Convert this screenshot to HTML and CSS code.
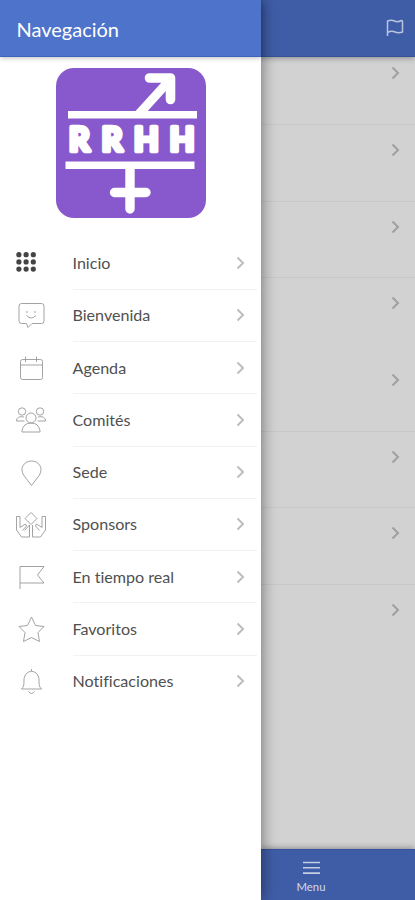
FILE: index.html
```html
<!DOCTYPE html>
<html lang="es">
<head>
  <meta charset="UTF-8" />
  <meta name="viewport" content="width=device-width, initial-scale=1.0"/>
  <title>Navegación</title>
  <link rel="stylesheet" href="styles.css">
</head>
<body>

  <div class="app">
    <!-- Side menu -->
    <aside class="drawer">
      <header class="drawer-header">
        <h1>Navegación</h1>
      </header>

      <div class="logo">
        <svg width="150" height="150" viewBox="0 0 150 150">
          <rect width="150" height="150" rx="18" fill="#8859cc"/>
          <g fill="none" stroke="#fff">
            <path d="M12 46.800H141M9.500 97.300H138.500" stroke-width="7.600"/>
            <path d="M82 47L112 14" stroke-width="9"/>
            <path d="M93.500 10H114.500V31.500" stroke-width="9.600" stroke-linecap="round" stroke-linejoin="round"/>
            <path d="M104 12H113V22Z" fill="#fff" stroke-width="2"/>
            <path d="M74 99V141M58.500 124.500H90" stroke-width="9.400" stroke-linecap="round"/>
          </g>
          <text class="logo-text" x="13 45.700 78 113.800" y="83.300">RRHH</text>
        </svg>
      </div>

      <nav class="menu">
        <a class="menu-item" href="#">
          <svg class="icon grid-icon" viewBox="0 0 32 32">
            <circle cx="3.900" cy="6.700" r="2.600"/><circle cx="11.100" cy="6.700" r="2.600"/><circle cx="18.300" cy="6.700" r="2.600"/>
            <circle cx="3.900" cy="13.900" r="2.600"/><circle cx="11.100" cy="13.900" r="2.600"/><circle cx="18.300" cy="13.900" r="2.600"/>
            <circle cx="3.900" cy="21.100" r="2.600"/><circle cx="11.100" cy="21.100" r="2.600"/><circle cx="18.300" cy="21.100" r="2.600"/>
          </svg>
          <span class="label">Inicio<svg class="chevron" viewBox="0 0 9 14"><path d="M1.500 1.500L7 7l-5.500 5.500"/></svg></span>
        </a>
        <a class="menu-item" href="#">
          <svg class="icon" viewBox="0 0 32 32"><path d="M6.500 3.500h20q2.500 0 2.500 2.500v15q0 2.500-2.500 2.500H17l-4 4-1.500-4h-5q-2.500 0-2.500-2.500V6q0-2.500 2.500-2.500z"/><path d="M12 11v2M20 11v2M11.500 15.500q4.500 5 9.500 0"/></svg>
          <span class="label">Bienvenida<svg class="chevron" viewBox="0 0 9 14"><path d="M1.500 1.500L7 7l-5.500 5.500"/></svg></span>
        </a>
        <a class="menu-item" href="#">
          <svg class="icon" viewBox="0 0 32 32"><rect x="5.500" y="7.500" width="22" height="20" rx="2"/><path d="M5.500 13h22M10.500 4.500v5.500M21.500 4.500v5.500"/></svg>
          <span class="label">Agenda<svg class="chevron" viewBox="0 0 9 14"><path d="M1.500 1.500L7 7l-5.500 5.500"/></svg></span>
        </a>
        <a class="menu-item" href="#">
          <svg class="icon" viewBox="0 0 32 32"><circle cx="7" cy="7.500" r="3.700"/><circle cx="25" cy="7.500" r="3.700"/><circle cx="16" cy="14" r="5"/><path d="M7 28v-1.500q1.500-7.500 9-7.500t9 7.500V28zM9.500 17H1.500c0-3.500 3-5 7.500-4M22.500 17h8c0-3.500-3-5-7.500-4"/></svg>
          <span class="label">Comités<svg class="chevron" viewBox="0 0 9 14"><path d="M1.500 1.500L7 7l-5.500 5.500"/></svg></span>
        </a>
        <a class="menu-item" href="#">
          <svg class="icon" viewBox="0 0 32 32"><path d="M16.500 28.500L8.500 18C4.500 11 9 4 16.500 4s12 7 8 14z"/></svg>
          <span class="label">Sede<svg class="chevron" viewBox="0 0 9 14"><path d="M1.500 1.500L7 7l-5.500 5.500"/></svg></span>
        </a>
        <a class="menu-item" href="#">
          <svg class="icon" viewBox="0 0 32 32"><path d="M16 3.500l6 6-6 6-6-6zM6.500 28l-5-7V7.500H5v11l5.500-3.500 1 2-4 4.500M6.500 28h8V16l-5 5.500M25.500 28l5-7V7.500H27v11L21.500 15l-1 2 4 4.500M25.500 28h-8V16"/></svg>
          <span class="label">Sponsors<svg class="chevron" viewBox="0 0 9 14"><path d="M1.500 1.500L7 7l-5.500 5.500"/></svg></span>
        </a>
        <a class="menu-item" href="#">
          <svg class="icon" viewBox="0 0 32 32"><path d="M5 28V5.500H29l-6.500 8.500 6.500 8H5"/></svg>
          <span class="label">En tiempo real<svg class="chevron" viewBox="0 0 9 14"><path d="M1.500 1.500L7 7l-5.500 5.500"/></svg></span>
        </a>
        <a class="menu-item" href="#">
          <svg class="icon" viewBox="0 0 32 32"><path d="M16.500 4l4 8.500 8.500 1-6 6 1.500 9-8-4-8 4 1.500-9-6-6 8.500-1z"/></svg>
          <span class="label">Favoritos<svg class="chevron" viewBox="0 0 9 14"><path d="M1.500 1.500L7 7l-5.500 5.500"/></svg></span>
        </a>
        <a class="menu-item" href="#">
          <svg class="icon" viewBox="0 0 32 32"><path d="M16.500 3v2M6.500 23c4-4 1.500-8 3-12 2-7.500 12-7.500 14 0 1.500 4-1 8 3 12zM13.500 25.500q3 4 6 0"/></svg>
          <span class="label">Notificaciones<svg class="chevron" viewBox="0 0 9 14"><path d="M1.500 1.500L7 7l-5.500 5.500"/></svg></span>
        </a>
      </nav>
    </aside>

    <!-- Dimmed page behind the menu -->
    <main class="page">
      <header class="page-header">
        <svg class="flag" viewBox="0 0 18 18"><path d="M1.500 17V2q4-1.500 7 0t7-.5q1 0 1 1V13q-4 1.500-7.500 0t-7.500.500"/></svg>
      </header>
      <div class="list">
        <div class="row first"><svg class="chevron" viewBox="0 0 9 14"><path d="M1.500 1.500L7 7l-5.500 5.500"/></svg></div>
        <div class="row"><svg class="chevron" viewBox="0 0 9 14"><path d="M1.500 1.500L7 7l-5.500 5.500"/></svg></div>
        <div class="row"><svg class="chevron" viewBox="0 0 9 14"><path d="M1.500 1.500L7 7l-5.500 5.500"/></svg></div>
        <div class="row no-line"><svg class="chevron" viewBox="0 0 9 14"><path d="M1.500 1.500L7 7l-5.500 5.500"/></svg></div>
        <div class="row"><svg class="chevron" viewBox="0 0 9 14"><path d="M1.500 1.500L7 7l-5.500 5.500"/></svg></div>
        <div class="row"><svg class="chevron" viewBox="0 0 9 14"><path d="M1.500 1.500L7 7l-5.500 5.500"/></svg></div>
        <div class="row"><svg class="chevron" viewBox="0 0 9 14"><path d="M1.500 1.500L7 7l-5.500 5.500"/></svg></div>
        <div class="row no-line"><svg class="chevron" viewBox="0 0 9 14"><path d="M1.500 1.500L7 7l-5.500 5.500"/></svg></div>
      </div>
      <footer class="tab-bar">
        <div class="tab">
          <svg class="burger" viewBox="0 0 17 14"><path d="M0 1.500h17M0 6.800h17M0 12.100h17"/></svg>
          <span>Menu</span>
        </div>
      </footer>
    </main>
  </div>

</body>
</html>
```
FILE: styles.css
```css
* {
  box-sizing: border-box;
}
body {
  margin: 0;
  font-family: Lato, sans-serif;
  font-variant-ligatures: none;
  color: #505050;
}
.app {
  display: flex;
  height: 900px;
  overflow: hidden;
}

/* Side menu */
.drawer {
  flex: 0 0 261px;
  position: relative;
  z-index: 2;
  background: #fff;
  box-shadow: 1px 0 14px rgba(0, 0, 0, 0.45);
}
.drawer-header {
  display: flex;
  align-items: center;
  height: 57px;
  padding: 2px 16.5px 0;
  background: #4e73cb;
  border-bottom: 1px solid #3e64bb;
  box-shadow: 0 1px 5px rgba(0, 0, 0, 0.25);
}
h1 {
  margin: 0;
  color: #fff;
  font-size: 20px;
  font-weight: 400;
}
.logo {
  padding: 11px 0 0 56px;
  height: 180.5px;
}
.logo svg {
  display: block;
}
.logo-text {
  font-family: Lato, sans-serif;
  font-size: 32px;
  font-weight: 700;
  fill: #fff;
  stroke: #fff;
  stroke-width: 4.6px;
  stroke-linejoin: round;
}
.menu-item {
  display: flex;
  align-items: center;
  height: 52.25px;
  padding-left: 15px;
  color: inherit;
  text-decoration: none;
}
.icon {
  width: 32px;
  height: 32px;
  margin-right: 25.5px;
  fill: none;
  stroke: #999;
  stroke-width: 0.9;
}
.grid-icon {
  fill: #444;
  stroke: none;
}
.label {
  flex: 1;
  display: flex;
  align-items: center;
  justify-content: space-between;
  height: 100%;
  margin-right: 4px;
  padding: 0 12px 1px 0;
  border-bottom: 1px solid #f2f2f2;
  font-size: 16.1px;
}
.menu-item:last-child .label {
  border-bottom-color: transparent;
}
.chevron {
  width: 9px;
  height: 14px;
  fill: none;
  stroke: #bdbdbd;
  stroke-width: 2;
}
.label .chevron {
  margin-top: 1px;
}

/* Page behind */
.page {
  flex: 1;
  display: flex;
  flex-direction: column;
  background: #d2d2d2;
}
.page-header {
  display: flex;
  justify-content: flex-end;
  height: 57px;
  padding: 19px 11px 0 0;
  background: #3f5da7;
  border-bottom: 1px solid #34519a;
  box-shadow: 0 1px 6px rgba(0, 0, 0, 0.35);
}
.flag {
  width: 18px;
  height: 18px;
  fill: none;
  stroke: #b9c4df;
  stroke-width: 1.5;
}
.list {
  flex: 1;
}
.row {
  display: flex;
  justify-content: flex-end;
  height: 76.7px;
  padding: 18px 15.5px 0 0;
  border-bottom: 1px solid #c8c8c8;
}
.row.first {
  height: 68px;
  padding-top: 9px;
}
.row.no-line {
  border-bottom-color: transparent;
}
.row .chevron {
  stroke: #a0a0a0;
}
.tab-bar {
  height: 51px;
  padding-left: 30px;
  background: #3f5da7;
  border-top: 1px solid #35539c;
  box-shadow: 0 -1px 6px rgba(0, 0, 0, 0.35);
}
.tab {
  display: flex;
  flex-direction: column;
  align-items: center;
  width: 40px;
  padding-top: 11px;
  color: #d2d8e6;
  font-size: 11.3px;
  line-height: 14px;
}
.burger {
  width: 17px;
  height: 14px;
  margin-bottom: 5px;
  stroke: #c5cee2;
  stroke-width: 1.6;
}
```
